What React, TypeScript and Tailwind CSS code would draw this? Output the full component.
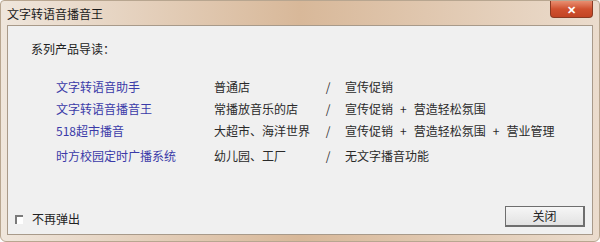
import React from "react";

const rows = [
  { name: "文字转语音助手", place: "普通店", use: ["宣传促销"], h: "h-[22px]" },
  { name: "文字转语音播音王", place: "常播放音乐的店", use: ["宣传促销", "营造轻松氛围"], h: "h-[22px]" },
  { name: "518超市播音", place: "大超市、海洋世界", use: ["宣传促销", "营造轻松氛围", "营业管理"], h: "h-[25px]" },
  { name: "时方校园定时广播系统", place: "幼儿园、工厂", use: ["无文字播音功能"], h: "h-[24px]" },
];

export default function App() {
  return (
    <div className="w-[600px] h-[242px] bg-white font-['Noto_Sans_CJK_SC',sans-serif] text-[12px] leading-none">
      <div className="w-full h-full flex flex-col rounded-b-[6px] rounded-t-[4px] border border-[#b8a690] bg-gradient-to-r from-[#efe6dc] via-[#d8b899] to-[#ebdccd] overflow-hidden">
        {/* title bar */}
        <div className="h-[24px] shrink-0 flex items-start justify-between pl-[6px] pr-[6px]">
          <div className="pt-[7px] text-[#1a1a1a]">文字转语音播音王</div>
          <div className="w-[43px] h-[17px] rounded-b-[4px] border border-t-0 border-[#8a3a22] bg-gradient-to-b from-[#e88e70] via-[#d0512f] to-[#c24424] flex items-center justify-center text-white text-[11px] font-bold">
            ✕
          </div>
        </div>

        {/* client area */}
        <div className="flex-1 px-[6px] pb-[6px] flex">
          <div className="flex-1 flex flex-col bg-[#f0f0f0] border border-[#a89a8a] pl-[23px] pr-[7px] pt-[17px] pb-[7px] text-[#222]">
            <div className="h-[13px]">系列产品导读：</div>

            <div className="flex flex-col mt-[25px] pl-[25px]">
              {rows.map((r) => (
                <div key={r.name} className={`flex items-start ${r.h}`}>
                  <div className="w-[158px] text-[#3a3aa8]">{r.name}</div>
                  <div className="w-[108px] text-[#2a2a2a]">{r.place}</div>
                  <div className="w-[12px] text-center text-[#333]">/</div>
                  <div className="pl-[11px] flex text-[#2a2a2a]">
                    {r.use.map((u, i) => (
                      <React.Fragment key={u}>
                        {i > 0 && <span className="px-[7px]">+</span>}
                        <span>{u}</span>
                      </React.Fragment>
                    ))}
                  </div>
                </div>
              ))}
            </div>

            <div className="mt-auto flex items-end justify-between">
              <div className="flex items-center gap-[9px] -ml-[16px] mb-[2px]">
                <div className="w-[8px] h-[9px] border-l-2 border-t-2 border-[#7a7a7a] bg-white" />
                <div className="text-[#222]">不再弹出</div>
              </div>
              <div className="w-[80px] h-[21px] border border-[#6e6e6e] border-r-2 border-b-2 bg-gradient-to-b from-[#f6f6f6] to-[#e2e2e2] flex items-center justify-center text-[#222]">
                关闭
              </div>
            </div>
          </div>
        </div>
      </div>
    </div>
  );
}
